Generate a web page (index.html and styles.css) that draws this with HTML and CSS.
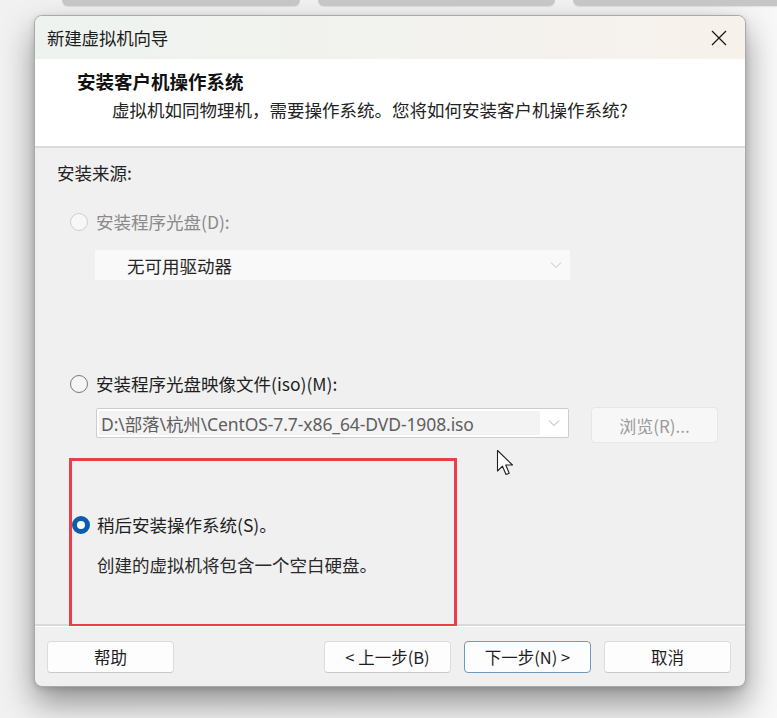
FILE: index.html
```html
<!DOCTYPE html>
<html lang="zh-CN">
<head>
<meta charset="utf-8">
<title>新建虚拟机向导</title>
<link rel="stylesheet" href="styles.css">
</head>
<body>
<div class="tabs">
  <div class="tab tab1"></div>
  <div class="tab tab2"></div>
  <div class="tab tab3"></div>
</div>
<div class="dialog">
  <div class="titlebar">
    <span class="title">新建虚拟机向导</span>
    <svg class="close" width="16" height="16" viewBox="0 0 16 16"><path d="M1 1 L15 15 M15 1 L1 15" stroke="#1a1a1a" stroke-width="1.3" fill="none"/></svg>
  </div>
  <div class="header">
    <div class="h-title">安装客户机操作系统</div>
    <div class="h-sub">虚拟机如同物理机，需要操作系统。您将如何安装客户机操作系统?</div>
  </div>
  <div class="body">
    <div class="label">安装来源:</div>
    <div class="radio-row disabled r1">
      <span class="radio"></span><span>安装程序光盘(D):</span>
    </div>
    <div class="select disabled-select">
      <span class="select-text">无可用驱动器</span>
      <svg class="chev" width="12" height="8" viewBox="0 0 12 8"><path d="M1 1.5 L6 6.5 L11 1.5" stroke="#c4c4c4" stroke-width="1" fill="none"/></svg>
    </div>
    <div class="radio-row r2">
      <span class="radio"></span><span>安装程序光盘映像文件(iso)(M):</span>
    </div>
    <div class="combo-row">
      <div class="combo">
        <span class="combo-text">D:\部落\杭州\CentOS-7.7-x86_64-DVD-1908.iso</span>
        <span class="combo-btn"><svg width="12" height="8" viewBox="0 0 12 8"><path d="M1 1.5 L6 6.5 L11 1.5" stroke="#b0b0b0" stroke-width="1" fill="none"/></svg></span>
      </div>
      <div class="browse">浏览(R)...</div>
    </div>
    <div class="highlight">
      <div class="radio-row r3">
        <span class="radio checked"></span><span>稍后安装操作系统(S)。</span>
      </div>
      <div class="desc">创建的虚拟机将包含一个空白硬盘。</div>
    </div>
  </div>
  <div class="footer">
    <div class="btn">帮助</div>
    <div class="spacer"></div>
    <div class="btn">&lt; 上一步(B)</div>
    <div class="btn focus">下一步(N) &gt;</div>
    <div class="btn">取消</div>
  </div>
</div>
<svg class="cursor" width="20" height="28" viewBox="0 0 20 28"><path d="M1.5 1.5 L1.5 22 L6.5 17.2 L10 25.5 L13.2 24.2 L9.8 16 L16.5 16 Z" fill="#ffffff" stroke="#222" stroke-width="1.1" stroke-linejoin="round"/></svg>
</body>
</html>
```
FILE: styles.css
```css
html, body {
  margin: 0;
  padding: 0;
}
body {
  width: 777px;
  height: 718px;
  overflow: hidden;
  background: linear-gradient(90deg, #f1f1f1 0%, #f2f2f2 90%, #f8f8f8 100%);
  font-family: "Noto Sans CJK SC", "Noto Sans", sans-serif;
  color: #1a1a1a;
  position: relative;
}
.tabs {
  display: flex;
  height: 6px;
  padding-left: 62px;
  gap: 18px;
}
.tab {
  height: 6px;
  background: #c6c6c6;
  border-radius: 0 0 6px 6px;
  box-shadow: 0 1px 1px rgba(0,0,0,0.08);
}
.tab1 { width: 238px; }
.tab2 { width: 237px; }
.tab3 { flex: 1; border-radius: 0 0 0 6px; }

.dialog {
  margin: 9px 0 0 34px;
  width: 710px;
  height: 670px;
  border: 1px solid #a9a9a9;
  border-radius: 8px;
  overflow: hidden;
  display: flex;
  flex-direction: column;
  background: #f0f0f0;
  box-shadow: 0 16px 32px rgba(0,0,0,0.4), 0 2px 6px rgba(0,0,0,0.14);
}
.titlebar {
  height: 43px;
  flex: none;
  display: flex;
  align-items: center;
  justify-content: space-between;
  padding: 0 16px 0 12px;
  background: linear-gradient(90deg, #eef3ef 0%, #f2f2ee 50%, #f7f1eb 100%);
}
.title {
  font-size: 17.5px;
  color: #1c1c1c;
  letter-spacing: -0.2px;
}
.close { display: block; margin-right: 2px; }

.header {
  flex: none;
  background: #ffffff;
  border-bottom: 2px solid #dadada;
  padding: 10px 0 0 42px;
  box-sizing: border-box;
  height: 89px;
}
.h-title {
  font-size: 18.5px;
  font-weight: bold;
  line-height: 24px;
  color: #111;
}
.h-sub {
  font-size: 17.5px;
  line-height: 24px;
  margin: 5px 0 0 35px;
  color: #222;
}

.body {
  flex: none;
  height: 478px;
  box-sizing: border-box;
  padding: 13px 0 0 22px;
  font-size: 17.5px;
  border-bottom: 2px solid #d9d9d9;
}
.label {
  line-height: 24px;
  color: #222;
}
.radio-row {
  display: flex;
  align-items: center;
  line-height: 24px;
  height: 24px;
  color: #1e1e1e;
}
.radio-row.disabled { color: #8a8a8a; }
.radio {
  width: 18px;
  height: 18px;
  border-radius: 50%;
  border: 1px solid #7a7a7a;
  background: #f5f5f5;
  box-sizing: border-box;
  margin-right: 8px;
  flex: none;
}
.disabled .radio {
  border-color: #cfcfcf;
  background: #f7f7f7;
}
.radio.checked {
  border: 5px solid #0b5cad;
  background: #ffffff;
  margin-right: 7px;
}
.r1 { margin: 25px 0 0 13px; }
.r2 { margin: 92px 0 0 13px; }
.r3 { margin: 52px 0 0 0; }

.select {
  margin: 16px 0 0 38px;
  width: 475px;
  height: 30px;
  box-sizing: border-box;
  display: flex;
  align-items: center;
  justify-content: space-between;
  background: #f9f9f9;
  padding: 0 8px 0 32px;
}
.select-text { color: #262626; }
.chev { display: block; }

.combo-row {
  display: flex;
  align-items: flex-start;
  margin: 11px 0 0 39px;
  gap: 22px;
  height: 36px;
}
.combo {
  margin-top: 1px;
  width: 473px;
  height: 30px;
  box-sizing: border-box;
  border: 1px solid #cdcdcd;
  border-radius: 2px;
  background: #ffffff;
  display: flex;
}
.combo-text {
  flex: 1;
  background: #f3f3f3;
  margin: 2px 0 2px 2px;
  display: flex;
  align-items: center;
  padding-left: 2px;
  color: #5f5f5f;
  font-family: "Noto Sans", "Noto Sans CJK SC", sans-serif;
  font-size: 17.5px;
  letter-spacing: -0.1px;
}
.combo-btn {
  width: 28px;
  display: flex;
  align-items: center;
  justify-content: center;
}
.browse {
  width: 127px;
  height: 36px;
  box-sizing: border-box;
  border: 1px solid #e6e6e6;
  border-radius: 4px;
  background: #f7f7f7;
  color: #9b9b9b;
  display: flex;
  align-items: center;
  justify-content: center;
  font-size: 17px;
}

.highlight {
  margin: 15px 0 0 12px;
  width: 388px;
  height: 169px;
  box-sizing: border-box;
  border: 3px solid #e8404a;
}
.desc {
  margin: 16px 0 0 25px;
  line-height: 24px;
  color: #2a2a2a;
}

.footer {
  flex: 1;
  display: flex;
  align-items: flex-start;
  padding: 14px 14px 0 12px;
  gap: 13px;
  border-top: 1px solid #ffffff;
}
.spacer { flex: 1; }
.btn {
  width: 127px;
  height: 32px;
  box-sizing: border-box;
  border: 1px solid #dcdcdc;
  border-bottom-color: #c9c9c9;
  border-radius: 4px;
  background: #fdfdfd;
  display: flex;
  align-items: center;
  justify-content: center;
  font-size: 16.5px;
  color: #1e1e1e;
}
.btn.focus {
  border: 1px solid #6e9bbd;
}

.cursor {
  position: absolute;
  left: 496px;
  top: 449px;
}
```
